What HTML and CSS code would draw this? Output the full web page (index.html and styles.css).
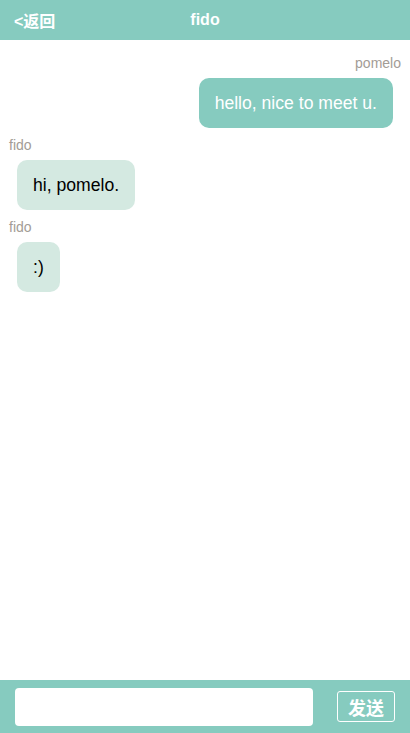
FILE: index.html
```html
<!DOCTYPE html>
<html>
<head>
<meta charset="utf-8">
<link rel="stylesheet" href="styles.css">
</head>
<body>
<div class="app">
  <header class="header">
    <span class="back">&lt;返回</span>
    <span class="title">fido</span>
  </header>
  <main class="messages">
    <div class="msg mine">
      <div class="name">pomelo</div>
      <div class="bubble">hello, nice to meet u.</div>
    </div>
    <div class="msg other">
      <div class="name">fido</div>
      <div class="bubble">hi, pomelo.</div>
    </div>
    <div class="msg other">
      <div class="name">fido</div>
      <div class="bubble">:)</div>
    </div>
  </main>
  <footer class="footer">
    <input class="input" type="text">
    <button class="send">发送</button>
  </footer>
</div>
</body>
</html>
```
FILE: styles.css
```css
html, body {
  margin: 0;
  padding: 0;
  background: #fff;
  font-family: "Liberation Sans", Arial, "Noto Sans CJK SC", sans-serif;
}
.app {
  display: flex;
  flex-direction: column;
  height: 733px;
}
.header {
  position: relative;
  height: 40px;
  background: #86cbbf;
  color: #fff;
  font-size: 16px;
  font-weight: bold;
  display: flex;
  align-items: center;
  justify-content: center;
}
.back {
  position: absolute;
  left: 14px;
  top: 0;
  bottom: 0;
  display: flex;
  align-items: center;
  font-size: 16px;
}
.title {
  font-size: 16px;
}
.messages {
  flex: 1;
  padding: 6px 9px 0 9px;
}
.msg {
  display: flex;
  flex-direction: column;
  margin-top: 8px;
}
.msg.mine {
  align-items: flex-end;
}
.msg.other {
  align-items: flex-start;
}
.name {
  font-size: 14px;
  line-height: 18px;
  color: #a39c96;
  margin-bottom: 6px;
}
.bubble {
  font-size: 17.6px;
  line-height: 18px;
  padding: 16px 16px;
  border-radius: 10px;
  margin: 0 8px;
}
.mine .bubble {
  background: #86cbbf;
  color: #fff;
}
.other .bubble {
  background: #d4e9e1;
  color: #000;
}
.footer {
  height: 53px;
  background: #86cbbf;
  display: flex;
  align-items: center;
  padding: 0 15px;
  box-sizing: border-box;
}
.input {
  width: 298px;
  height: 38px;
  box-sizing: border-box;
  border: none;
  border-radius: 4px;
  background: #fff;
  margin: 0;
  outline: none;
}
.send {
  margin-left: 24px;
  width: 58px;
  height: 31px;
  box-sizing: border-box;
  border: 1px solid #fff;
  border-radius: 3px;
  background: transparent;
  color: #fff;
  font-size: 18px;
  font-weight: bold;
  font-family: "Noto Sans CJK SC", sans-serif;
  padding: 0;
  line-height: 1;
}
```
